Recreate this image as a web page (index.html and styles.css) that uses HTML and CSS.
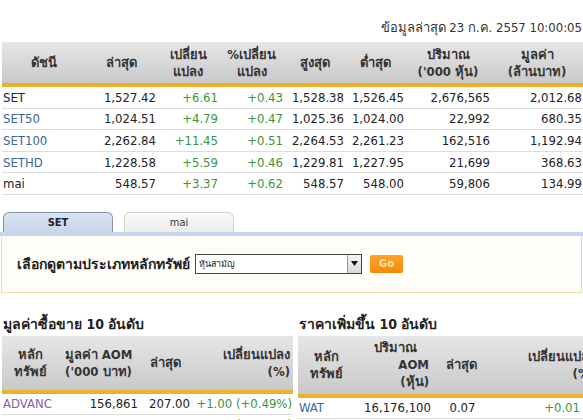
FILE: index.html
```html
<!DOCTYPE html>
<html lang="th">
<head>
<meta charset="utf-8">
<link rel="stylesheet" href="styles.css">
</head>
<body>
<div class="page">
  <div class="stamp">ข้อมูลล่าสุด 23 ก.ค. 2557 10:00:05</div>
  <table class="idx">
    <colgroup>
      <col class="c1"><col class="c2"><col class="c3"><col class="c4"><col class="c5"><col class="c6"><col class="c7"><col class="c8">
    </colgroup>
    <thead>
      <tr>
        <th>ดัชนี</th><th>ล่าสุด</th><th>เปลี่ยน<br>แปลง</th><th>%เปลี่ยน<br>แปลง</th><th>สูงสุด</th><th>ต่ำสุด</th><th>ปริมาณ<br>('000 หุ้น)</th><th>มูลค่า<br>(ล้านบาท)</th>
      </tr>
    </thead>
    <tbody>
      <tr><td class="name">SET</td><td>1,527.42</td><td class="up">+6.61</td><td class="up">+0.43</td><td>1,528.38</td><td>1,526.45</td><td>2,676,565</td><td>2,012.68</td></tr>
      <tr><td class="name link">SET50</td><td>1,024.51</td><td class="up">+4.79</td><td class="up">+0.47</td><td>1,025.36</td><td>1,024.00</td><td>22,992</td><td>680.35</td></tr>
      <tr><td class="name link">SET100</td><td>2,262.84</td><td class="up">+11.45</td><td class="up">+0.51</td><td>2,264.53</td><td>2,261.23</td><td>162,516</td><td>1,192.94</td></tr>
      <tr><td class="name link">SETHD</td><td>1,228.58</td><td class="up">+5.59</td><td class="up">+0.46</td><td>1,229.81</td><td>1,227.95</td><td>21,699</td><td>368.63</td></tr>
      <tr><td class="name">mai</td><td>548.57</td><td class="up">+3.37</td><td class="up">+0.62</td><td>548.57</td><td>548.00</td><td>59,806</td><td>134.99</td></tr>
    </tbody>
  </table>

  <div class="tabs">
    <div class="tab active">SET</div>
    <div class="tab">mai</div>
  </div>
  <div class="tabline"></div>
  <div class="filter">
    <span class="flabel">เลือกดูตามประเภทหลักทรัพย์</span>
    <div class="select">
      <span class="sval">หุ้นสามัญ</span>
      <span class="sbtn"><svg width="7" height="5" viewBox="0 0 7 5"><path d="M0 0h7L3.5 5z" fill="#111"/></svg></span>
    </div>
    <div class="go">Go</div>
  </div>

  <div class="bottom">
    <div class="panel left">
      <div class="ptitle">มูลค่าซื้อขาย 10 อันดับ</div>
      <table class="top">
        <colgroup><col class="l1"><col class="l2"><col class="l3"><col class="l4"></colgroup>
        <thead>
          <tr><th class="ctr">หลัก<br>ทรัพย์</th><th class="ctr">มูลค่า AOM<br>('000 บาท)</th><th class="ctr">ล่าสุด</th><th class="rt">เปลี่ยนแปลง<br>(%)</th></tr>
        </thead>
        <tbody>
          <tr><td class="name visited">ADVANC</td><td>156,861</td><td>207.00</td><td class="up">+1.00 (+0.49%)</td></tr>
          <tr><td class="name visited">BLAND</td><td>154,340</td><td>2.12</td><td class="up">0.00 (+0.00%)</td></tr>
        </tbody>
      </table>
    </div>
    <div class="panel right">
      <div class="ptitle">ราคาเพิ่มขึ้น 10 อันดับ</div>
      <table class="top tall">
        <colgroup><col class="r1"><col class="r2"><col class="r3"><col class="r4"></colgroup>
        <thead>
          <tr><th class="ctr">หลัก<br>ทรัพย์</th><th class="rt"><span class="pad">ปริมาณ</span><br>AOM<br>(หุ้น)</th><th class="ctr">ล่าสุด</th><th class="rt">เปลี่ยนแปลง<br>(%)</th></tr>
        </thead>
        <tbody>
          <tr><td class="name link2">WAT</td><td>16,176,100</td><td class="ctr">0.07</td><td class="up">+0.01</td></tr>
          <tr><td class="name link2">AJD</td><td>1,200</td><td class="ctr">1.05</td><td class="up">+0.05</td></tr>
        </tbody>
      </table>
    </div>
  </div>
</div>
</body>
</html>
```

FILE: styles.css
```css
html, body {
  margin: 0;
  padding: 0;
  background: #fff;
  overflow: hidden;
}
body {
  font-family: "DejaVu Sans Condensed", "DejaVu Sans", "Noto Sans", sans-serif;
  font-size: 13px;
  color: #222;
}
.page {
  width: 583px;
  height: 420px;
  overflow: hidden;
}
.stamp {
  text-align: right;
  padding: 20px 1px 0 0;
  height: 22px;
  line-height: 16px;
  color: #333;
}
table {
  border-collapse: collapse;
  table-layout: fixed;
}
.idx {
  margin-left: 2px;
  width: 581px;
}
.c1 { width: 83px; }
.c2 { width: 72px; }
.c3 { width: 62px; }
.c4 { width: 65px; }
.c5 { width: 61px; }
.c6 { width: 60px; }
.c7 { width: 86px; }
.c8 { width: 92px; }
th {
  background: linear-gradient(#e6e6e6, #c9c9c9);
  font-weight: bold;
  color: #333;
  line-height: 17px;
  padding: 0 4px;
  text-align: center;
  border-bottom: 4px solid #eeb12a;
}
.idx th { height: 41px; }
td {
  text-align: right;
  padding: 0 1px 0 4px;
  height: 20.6px;
  border-bottom: 1px solid #dcdcdc;
  white-space: nowrap;
}
td.name { text-align: left; padding-left: 1px; }
.up { color: #3b953b; }
.link { color: #3b6593; }
.visited { color: #7f63a8; }
.link2 { color: #2f6aae; }

.tabs {
  display: flex;
  gap: 11px;
  margin-top: 17px;
  padding-left: 3px;
  height: 20px;
}
.tab {
  width: 108px;
  height: 19px;
  line-height: 19px;
  text-align: center;
  border: 1px solid #d2d2d2;
  border-bottom: none;
  border-radius: 6px 6px 0 0;
  background: linear-gradient(#f9f9f9, #ececec);
  font-size: 11px;
  color: #333;
}
.tab.active {
  background: linear-gradient(#d9e4f4, #c8d6ed);
  border-color: #8394b0;
  font-weight: bold;
  color: #222;
}
.tabline {
  height: 4px;
  background: #c8d5ec;
}
.filter {
  margin: 0 1px 0 1px;
  height: 56px;
  border: 1px solid #efdca8;
  border-top: none;
  background: #fffef8;
  display: flex;
  align-items: center;
  padding-left: 15px;
}
.flabel {
  font-weight: bold;
  font-size: 14px;
  color: #222;
  margin-right: 5px;
}
.select {
  width: 165px;
  height: 18px;
  border: 1px solid #444;
  display: flex;
  align-items: stretch;
  background: #fff;
}
.sval {
  flex: 1;
  font-size: 9px;
  line-height: 18px;
  padding-left: 3px;
}
.sbtn {
  width: 13px;
  border-left: 1px solid #999;
  background: linear-gradient(#f4f4f4, #d8d8d8);
  display: flex;
  align-items: center;
  justify-content: center;
}
.go {
  margin-left: 8px;
  width: 33px;
  height: 18px;
  border-radius: 2px;
  background: linear-gradient(#ffa42a, #f58a05);
  color: #ffe3a8;
  font-weight: bold;
  font-size: 11px;
  line-height: 18px;
  text-align: center;
}

.bottom {
  display: flex;
  margin-top: 23px;
}
.panel.left { width: 291px; margin-left: 2px; }
.panel.right { margin-left: 5px; width: 300px; }
.ptitle {
  font-weight: bold;
  font-size: 14px;
  line-height: 16px;
  height: 20px;
  padding-left: 1px;
  color: #222;
}
.top { width: 100%; }
.top th { height: 54px; }
.top.tall th { height: 58px; }
.l1 { width: 56px; }
.l2 { width: 81px; }
.l3 { width: 52px; }
.l4 { width: 102px; }
.r1 { width: 57px; }
.r2 { width: 77px; }
.r3 { width: 58px; }
.r4 { width: 108px; }
th.ctr { text-align: center; }
th.rt { text-align: right; padding-right: 3px; }
td.ctr { text-align: center; }
.pad { padding-right: 12px; }
.top td { height: 20px; }
.right td:last-child { padding-right: 18px; }
```
